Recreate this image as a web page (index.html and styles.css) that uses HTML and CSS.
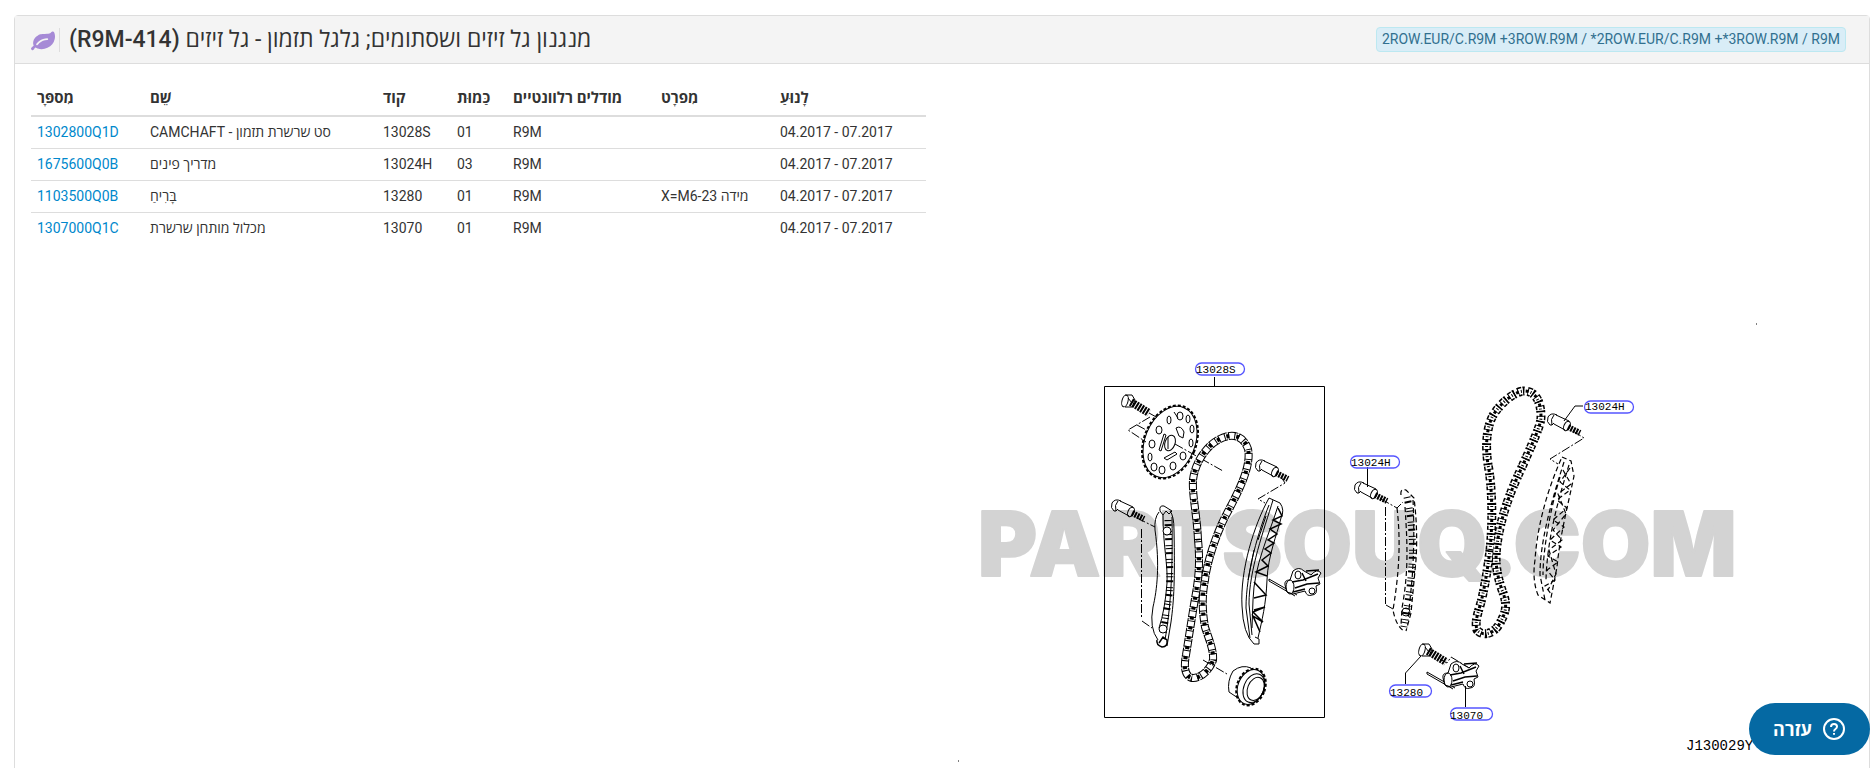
FILE: index.html
```html
<!DOCTYPE html>
<html lang="he">
<head>
  <meta charset="UTF-8" />
  <meta name="viewport" content="width=device-width, initial-scale=1.0"/>
  <title>R9M-414</title>
  <link rel="stylesheet" href="styles.css">
</head>
<body>
  <div class="panel">
    <div class="panel-heading">
      <h1 class="title">
        <svg class="leaf" viewBox="0 0 1792 1792" aria-hidden="true"><path d="M1280 832q0-26-19-45t-45-19q-172 0-318 49.500t-259.500 134-235.500 219.500q-19 21-19 45 0 26 19 45t45 19q24 0 45-19 27-24 74-71t67-66q137-124 268.500-176t313.500-52q26 0 45-19t19-45zM1792 634q0 95-20 193-46 224-184.500 383t-357.500 268q-214 108-438 108-148 0-286-47-15-5-88-42t-96-37q-16 0-39.500 32t-45 70-52.500 70-60 32q-43 0-63.500-17.500t-45.500-59.500q-2-4-6-11t-5.500-10-3-9.500-1.500-13.500q0-35 31-73.500t68-65.500 68-56 31-48q0-4-14-38t-16-44q-9-51-9-104 0-115 43.500-220t119-184.500 170.500-139 204-95.500q55-18 145-25.500t179.500-9 178.500-6 163.500-24 113.500-56.500l29.500-29.500 29.500-28 27-20 36.500-16 43.500-4.500q39 0 70.500 46t47.500 112 24 124 8 96z"/></svg>
        <bdi class="title-text" dir="rtl">מנגנון גל זיזים ושסתומים; גלגל תזמון - גל זיזים <span class="code">(R9M-414)</span></bdi>
      </h1>
      <span class="badge">2ROW.EUR/C.R9M +3ROW.R9M / *2ROW.EUR/C.R9M +*3ROW.R9M / R9M</span>
    </div>

    <div class="panel-body">
      <div class="col">
        <table class="parts">
          <colgroup>
            <col class="c-number"><col class="c-name"><col class="c-code"><col class="c-qty"><col class="c-models"><col class="c-spec"><col>
          </colgroup>
          <thead>
            <tr>
              <th>מִספָּר</th>
              <th>שֵׁם</th>
              <th>קוד</th>
              <th>כַּמוּת</th>
              <th>מודלים רלוונטיים</th>
              <th>מִפרָט</th>
              <th>לָנוּעַ</th>
            </tr>
          </thead>
          <tbody>
            <tr>
              <td><a href="#1302800Q1D">1302800Q1D</a></td>
              <td><bdi dir="rtl">סט שרשרת תזמון - CAMCHAFT</bdi></td>
              <td>13028S</td>
              <td>01</td>
              <td>R9M</td>
              <td></td>
              <td>04.2017 - 07.2017</td>
            </tr>
            <tr>
              <td><a href="#1675600Q0B">1675600Q0B</a></td>
              <td>מדריך פינים</td>
              <td>13024H</td>
              <td>03</td>
              <td>R9M</td>
              <td></td>
              <td>04.2017 - 07.2017</td>
            </tr>
            <tr>
              <td><a href="#1103500Q0B">1103500Q0B</a></td>
              <td>בָּרִיחַ</td>
              <td>13280</td>
              <td>01</td>
              <td>R9M</td>
              <td><bdi dir="rtl">מידה X=M6-23</bdi></td>
              <td>04.2017 - 07.2017</td>
            </tr>
            <tr>
              <td><a href="#1307000Q1C">1307000Q1C</a></td>
              <td>מכלול מותחן שרשרת</td>
              <td>13070</td>
              <td>01</td>
              <td>R9M</td>
              <td></td>
              <td>04.2017 - 07.2017</td>
            </tr>
          </tbody>
        </table>
      </div>

      <div class="col">
        <svg class="diagram" viewBox="958 79 895 700">
          <defs>
            <path id="chainA" d="M1198 540C1197 515 1192 495 1193 480C1195 462 1207 446 1218 440C1230 433 1243 434 1248 449C1252 468 1236 496 1225 517C1216 535 1207 562 1205 580C1202 595 1202 610 1205 627C1208 637 1214 650 1213 660C1210 670 1200 679 1192 678C1184 676 1184 665 1186 655C1190 630 1193 610 1196 593C1199 575 1200 560 1198 540Z"/>
            <path id="chainB" d="M1490 550C1493 520 1492 490 1489 470C1484 445 1487 422 1496 411C1505 399 1517 391 1524 391C1536 391 1541 402 1541 417C1541 425 1533 442 1522 467C1511 490 1501 515 1497 545C1495 560 1496 572 1502 590C1508 605 1506 612 1500 623C1494 634 1483 637 1477 630C1474 620 1480 608 1482 598C1486 580 1488 565 1490 550Z"/>
            <g id="pin">
              <path class="ink" d="M4-6Q-2-9-5-4Q-7 1-3 4L-1 4Q-3-2 1-6M-1 4L1 2M3-6L16 0M1 3L12 9"/>
              <ellipse class="ink" cx="14" cy="5" rx="3" ry="5" transform="rotate(25 14 5)"/>
              <path class="thread" d="M15 6L27 12"/>
            </g>
            <g id="bolt">
              <ellipse class="ink" cx="0" cy="0" rx="3" ry="6" transform="rotate(15)"/>
              <path class="ink" d="M0-6L7-6L10-1L7 6L0 6M3-3L7 2"/>
              <path class="thread wide" d="M6 1L24 12"/>
            </g>
            <g id="tensioner">
              <path class="ink" d="M-18-4L10 12M-18-2L8 13M-18-4V-2"/>
              <path class="ink fill" d="M-2 2Q-3-3 3-3L6-12Q12-17 17-12L24-8Q30-15 34-10L31-5L33 1L29 3Q31 12 25 12Q20 14 18 8L6 11L0 9Z"/>
              <ellipse class="ink" cx="3" cy="4" rx="4" ry="7"/>
              <ellipse class="ink" cx="11" cy="-8" rx="3" ry="4"/>
              <circle class="ink" cx="25" cy="8" r="3"/>
              <path class="ink thick" d="M5-1L16-3L31-9M8 5L20 1L32 0M15-10L19-2M6 9L18 6M19-12L32-13"/>
            </g>
          </defs>

          <!-- watermark -->
          <text class="watermark" x="978" y="576">PARTSOUQ.COM</text>

          <!-- stray scan marks -->
          <path class="ink" d="M1756 324h1M958 761h1"/>

          <!-- kit frame -->
          <path class="frame" d="M1214.500 377V386.500M1104.500 386.500H1324.500V717.500H1104.500Z"/>

          <!-- camshaft sprocket -->
          <use href="#bolt" x="1125" y="401"/>
          <path class="axis" d="M1149 413L1158 418M1150 417L1128 430L1146 442M1137 425L1148 431"/>
          <g transform="rotate(22 1170 442)">
            <ellipse class="ink" cx="1170" cy="442" rx="25" ry="37"/>
            <ellipse class="teeth" cx="1170" cy="442" rx="26" ry="38"/>
          </g>
          <g class="ink">
            <ellipse cx="1169" cy="420" rx="2" ry="4"/><ellipse cx="1180" cy="416" rx="3" ry="4"/>
            <ellipse cx="1188" cy="419" rx="2" ry="4"/><ellipse cx="1192" cy="429" rx="2" ry="4"/>
            <ellipse cx="1191" cy="443" rx="2" ry="4"/><ellipse cx="1183" cy="456" rx="3" ry="4"/>
            <ellipse cx="1173" cy="466" rx="3" ry="4"/><ellipse cx="1162" cy="470" rx="3" ry="4"/>
            <ellipse cx="1154" cy="467" rx="3" ry="4"/><ellipse cx="1150" cy="457" rx="2" ry="4"/>
            <ellipse cx="1152" cy="444" rx="3" ry="4"/><ellipse cx="1159" cy="430" rx="3" ry="4"/>
            <ellipse cx="1170" cy="443" rx="5" ry="8" transform="rotate(20 1170 443)"/>
            <path d="M1159 450L1164 434L1166 435L1161 451ZM1176 428Q1181 425 1184 432L1183 438L1179 436ZM1164 458L1175 452L1177 454L1167 460ZM1174 412L1178 418M1168 437V449"/>
          </g>
          <path class="axis" d="M1175 444L1223 471"/>

          <!-- timing chain of the kit -->
          <use class="links" href="#chainA"/>
          <use class="holes" href="#chainA"/>
          <use class="plates" href="#chainA"/>

          <!-- chain guide, left -->
          <use href="#pin" x="1117" y="507"/>
          <path class="axis" d="M1137 518L1155 527M1141.500 529V619M1142 621L1152 628"/>
          <path class="ink" d="M1159 512Q1154 518 1155 530C1160 565 1157 590 1153 607Q1149 628 1158 640M1160 511Q1159 505 1164 506L1172 511L1169 514L1166 511L1163 515ZM1170 511Q1174 516 1174 530C1175 580 1174 600 1171 622L1167 646M1172 517C1173 580 1170 610 1165 640M1163 515C1163 545 1168 565 1167 583Q1165 610 1159 628"/>
          <path class="lattice" d="M1168 520C1169 560 1172 585 1167 608L1163 634"/>
          <circle class="ink fill" cx="1167" cy="531" r="4"/><circle class="ink fill" cx="1163" cy="629" r="4"/>
          <path class="ink thick" d="M1157 640Q1156 645 1162 647Q1168 647 1167 640L1163 637L1159 643"/>

          <!-- tension arm, right -->
          <use href="#pin" x="1261" y="467"/>
          <path class="axis" d="M1281 477L1285 483L1258 499L1265 503"/>
          <path class="ink" d="M1269 498L1280 503Q1285 510 1281 518C1277 535 1268 555 1267 580C1266 605 1262 620 1258 638M1269 498C1254 525 1240 570 1242 606Q1243 634 1254 644L1259 644V639L1255 637M1273 500C1264 530 1249 570 1249 604L1252 635M1269 505C1259 530 1246 572 1246 608L1250 638M1278 506C1269 535 1254 565 1253 600L1252 628"/>
          <path class="ink thick" d="M1278 508L1282 516L1273 520L1281 524L1270 529L1277 534L1268 540L1274 543L1265 549L1271 553L1262 560L1268 566L1256 572L1267 576M1254 582L1266 595L1254 598M1254 610L1265 607L1253 612L1263 622L1253 616L1260 632"/>
          <path class="ink" d="M1266 516L1258 540M1254 550L1248 580"/>

          <use href="#tensioner" x="1287" y="583"/>

          <!-- crankshaft sprocket -->
          <path class="axis" d="M1203 660L1227 674"/>
          <path class="ink fill" d="M1251 668Q1242 664 1233 671Q1227 681 1229 692L1238 698"/>
          <g transform="rotate(22 1251 687)">
            <ellipse class="ink fill" cx="1251" cy="687" rx="13" ry="18"/>
            <ellipse class="teeth" cx="1251" cy="687" rx="14" ry="19"/>
            <ellipse class="ink" cx="1254" cy="687" rx="10" ry="15"/>
            <ellipse class="ink" cx="1256" cy="687" rx="8" ry="12"/>
          </g>

          <!-- installed chain guide -->
          <path class="ink" d="M1367.500 467V487"/>
          <use href="#pin" x="1360" y="489"/>
          <path class="axis" d="M1381 499L1397 508L1403 502M1385.500 507V604M1386 605L1393 609"/>
          <g class="hidden">
            <path d="M1397 508C1402 550 1397 585 1393 610Q1396 626 1404 631M1401 495Q1400 488 1406 490L1414 498Q1418 530 1416 560L1411 613L1406 631M1413 500Q1415 540 1412 580L1408 620M1405 507C1408 550 1408 575 1402 608L1401 625"/>
            <path class="lattice" d="M1407 497C1415 535 1413 565 1409 595L1404 627"/>
          </g>
          <circle class="ink" cx="1406" cy="612" r="4"/>

          <!-- installed chain -->
          <use class="links broken" href="#chainB"/>
          <use class="holes broken" href="#chainB"/>
          <use class="plates broken" href="#chainB"/>

          <!-- installed tension arm -->
          <path class="ink" d="M1583 406H1575L1564 421"/>
          <use href="#pin" x="1553" y="421"/>
          <path class="axis" d="M1573 431L1584 438L1550 459L1558 464"/>
          <g class="hidden">
            <path d="M1562 457L1571 461L1574 476C1568 505 1560 535 1557 567L1550 603L1538 595Q1532 580 1535 560C1537 530 1545 495 1562 457M1564 462C1552 500 1540 540 1540 575L1545 600M1560 477C1550 510 1543 550 1543 575M1569 465C1558 500 1547 540 1546 580"/>
            <path d="M1570 468L1560 482L1570 490L1557 500L1567 508L1553 520L1564 527L1550 540L1561 547L1548 556L1558 562L1547 570L1555 580L1545 586L1552 595"/>
            <path d="M1563 470L1571 484L1558 494L1566 514L1553 530L1562 540L1549 550L1556 574L1548 590"/>
          </g>

          <!-- tensioner with its bolt -->
          <use href="#bolt" x="1422" y="650"/>
          <path class="axis" d="M1440 659L1447 663L1451 657L1476 672"/>
          <use href="#tensioner" x="1445" y="676"/>
          <path class="ink" d="M1421 656L1405.500 673V684M1465.500 686V707"/>

          <!-- callouts -->
          <g class="callout">
            <rect x="1195.500" y="363" width="49" height="12" rx="6"/><text x="1196" y="373">13028S</text>
            <rect x="1350.500" y="456" width="49" height="12" rx="6"/><text x="1351" y="466">13024H</text>
            <rect x="1584.500" y="401" width="49" height="12" rx="6"/><text x="1585" y="410">13024H</text>
            <rect x="1389.500" y="685" width="42" height="12" rx="6"/><text x="1390" y="696">13280</text>
            <rect x="1450.500" y="708" width="42" height="12" rx="6"/><text x="1450" y="719">13070</text>
          </g>
          <text class="sheet" x="1686" y="750">J130029Y</text>
        </svg>
      </div>
    </div>
  </div>

  <button type="button" class="help" dir="rtl">
    <svg class="help-icon" viewBox="0 0 24 24" aria-hidden="true">
      <circle cx="12" cy="12" r="10"/>
      <path d="M9 10Q9 7 12 7Q15 7 15 9.500Q15 11 13.500 12Q12 13 12 14.500M12 16V17.800"/>
    </svg>
    <span>עזרה</span>
  </button>
</body>
</html>
```
FILE: styles.css
```css
* {
  box-sizing: border-box;
}

body {
  margin: 0;
  padding: 15px 5px 0 14px;
  height: 100vh;
  overflow: hidden;
  background: #fff;
  color: #333;
  font-family: Roboto, "Open Sans", sans-serif;
  font-size: 14px;
  line-height: 20px;
}

.panel {
  min-height: 100vh;
  border: 1px solid #ddd;
  border-radius: 4px;
}

.panel-heading {
  display: flex;
  justify-content: space-between;
  align-items: center;
  height: 48px;
  padding: 0 23px 0 16px;
  background: #f4f4f4;
  border-bottom: 1px solid #ddd;
}

.title {
  display: flex;
  align-items: center;
  margin: 0;
  font-size: 23px;
  font-weight: 400;
  line-height: 24px;
}

.title-text {
  margin-left: 4px;
  padding-left: 9px;
  border-left: 1px solid #ddd;
}

.code {
  font-weight: 500;
}

.leaf {
  width: 24px;
  height: 24px;
  fill: #a68ad6;
}

.badge {
  padding: 0 5px;
  background: #d9edf7;
  border: 1px solid #bce8f1;
  border-radius: 4px;
  color: #31708f;
  line-height: 23px;
}

.panel-body {
  display: flex;
}

.col {
  flex: 1;
  min-width: 0;
  padding: 15px 16px 0;
}

.parts {
  width: 100%;
  table-layout: fixed;
  border-collapse: collapse;
}

.parts th,
.parts td {
  padding: 5px 6px 6px;
  text-align: left;
  border-bottom: 1px solid #ddd;
  white-space: nowrap;
}

.parts th {
  padding: 9px 6px 7px;
  border-bottom: 2px solid #ddd;
  font-size: 15px;
  font-weight: 700;
}

.parts tbody tr:last-child td {
  border-bottom: 0;
}

.parts a {
  color: #0088cc;
  text-decoration: none;
}

.c-number { width: 113px; }
.c-name { width: 233px; }
.c-code { width: 74px; }
.c-qty { width: 56px; }
.c-models { width: 148px; }
.c-spec { width: 119px; }

/* diagram */
.diagram {
  display: block;
  width: 100%;
}

.watermark {
  font-family: Inter, sans-serif;
  font-size: 90px;
  font-weight: 900;
  fill: #d3d3d3;
  stroke: #d3d3d3;
  stroke-width: 2;
  stroke-linejoin: round;
}

.ink,
.axis,
.frame,
.hidden {
  fill: none;
  stroke: #000;
  stroke-width: 1;
}

.fill {
  fill: #fff;
}

.thick {
  stroke-width: 1.5;
}

.axis {
  stroke-dasharray: 9 2 2 2;
}

.hidden {
  stroke-width: 1.2;
  stroke-dasharray: 5 3;
}

.thread {
  fill: none;
  stroke: #000;
  stroke-width: 6;
  stroke-dasharray: 2 1;
}

.thread.wide {
  stroke-width: 8;
}

.teeth {
  fill: none;
  stroke: #000;
  stroke-width: 2;
  stroke-dasharray: 3 2;
}

.lattice {
  fill: none;
  stroke: #000;
  stroke-width: 7;
  stroke-dasharray: 1 3 2 5 1 2;
}

.links {
  fill: none;
  stroke: #000;
  stroke-width: 8;
  stroke-dasharray: 9 1;
}

.holes {
  fill: none;
  stroke: #fff;
  stroke-width: 6;
  stroke-dasharray: 5 1 2 2;
  stroke-dashoffset: -1;
}

.plates {
  fill: none;
  stroke: #000;
  stroke-width: 4;
  stroke-dasharray: 3 7;
  stroke-dashoffset: -8;
}

.links.broken {
  stroke-width: 9;
  stroke-dasharray: 4 1 2 3;
}

.holes.broken {
  stroke-dasharray: 4 2 3 1;
}

.plates.broken {
  stroke-width: 3;
  stroke-dasharray: 3 2 1 4;
}

.callout rect {
  fill: none;
  stroke: #5555ff;
  stroke-width: 1.3;
}

.callout text,
.sheet {
  font-family: "Liberation Mono", monospace;
  font-size: 11px;
  fill: #000;
}

.sheet {
  font-size: 14px;
}

/* help widget */
.help {
  position: fixed;
  right: 5px;
  bottom: 13px;
  display: flex;
  align-items: center;
  gap: 10px;
  height: 52px;
  padding: 0 24px;
  border: 0;
  border-radius: 26px;
  background: #0569a3;
  color: #fff;
  font-family: "Open Sans", sans-serif;
  font-size: 18px;
  font-weight: 700;
  cursor: pointer;
}

.help-icon {
  width: 24px;
  height: 24px;
  fill: none;
  stroke: #fff;
  stroke-width: 2;
}
```
